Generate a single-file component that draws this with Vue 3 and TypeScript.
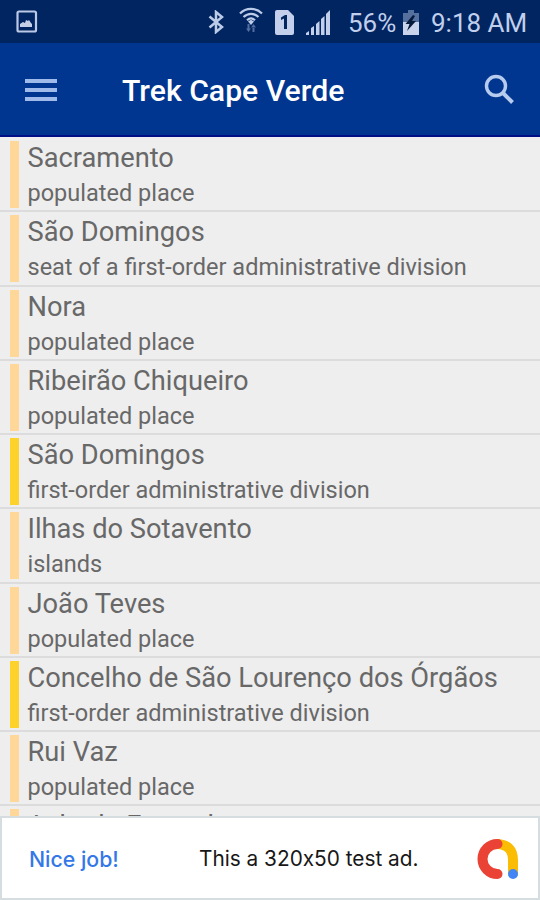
<script setup lang="ts">
interface Place {
  name: string
  kind: string
  major?: boolean
}

const places: Place[] = [
  { name: 'Sacramento', kind: 'populated place' },
  { name: 'São Domingos', kind: 'seat of a first-order administrative division' },
  { name: 'Nora', kind: 'populated place' },
  { name: 'Ribeirão Chiqueiro', kind: 'populated place' },
  { name: 'São Domingos', kind: 'first-order administrative division', major: true },
  { name: 'Ilhas do Sotavento', kind: 'islands' },
  { name: 'João Teves', kind: 'populated place' },
  { name: 'Concelho de São Lourenço dos Órgãos', kind: 'first-order administrative division', major: true },
  { name: 'Rui Vaz', kind: 'populated place' },
  { name: 'Achada Fazenda', kind: '' },
]
</script>

<template>
  <div class="screen">
    <div class="status">
      <svg class="picture" width="22" height="24" viewBox="0 0 22 24">
        <rect x="1.5" y="1.5" width="18.5" height="20" rx="1.5" fill="none" stroke="#bcc9e6" stroke-width="2.2" />
        <path d="M4 17v-3l3-2 2 1 1-3 2 1 1-1 2 3 1 1v3z" fill="#c5d0e8" />
      </svg>
      <svg class="bluetooth" width="16" height="24" viewBox="0 0 16 24">
        <path d="M1.500 6.500 14 17 8 22V2l6 5L1.500 17.500" fill="none" stroke="#bccbe8" stroke-width="2.500" />
      </svg>
      <svg class="wifi" width="24" height="26" viewBox="0 0 24 26">
        <g fill="none" stroke="#bccbe8" stroke-width="2.200">
          <path d="M1 6.500C7 .4 17 .4 23 6.500M4.500 10c4.500-4.300 10.500-4.300 15 0M8 13.300c2.500-2.300 5.500-2.300 8 0" />
        </g>
        <path d="m9 14.500 3-1.800 3 1.800-3 3.500z" fill="#bccbe8" />
        <path d="M7 21.500h5L9.500 25zM8.500 17h2v5h-2zM12 20.500h5L14.500 17zM13.500 20h2v5h-2z" fill="#526d9f" />
      </svg>
      <svg class="sim" width="19" height="25" viewBox="0 0 19 25">
        <path d="M2 0h11l6 6v17q0 2-2 2H2q-2 0-2-2V2q0-2 2-2z" fill="#c4d0eb" />
        <path d="M6 7.500 10 5h2v14H9V8.500L6 10z" fill="#00265f" />
      </svg>
      <svg class="signal" width="24" height="25" viewBox="0 0 24 25">
        <path d="M0 25v-2l3-2v4zM5 25v-7l3-2v9zM10 25V14l3.500-3v14zM15 25V9l3.500-3v19zM20 25V4l4-4v25z" fill="#c4d0eb" />
      </svg>
      <span class="percent">56%</span>
      <svg class="battery" width="16" height="25" viewBox="0 0 16 25">
        <path d="M0 3h5V0h6v3h5v9H0z" fill="#55709f" />
        <path d="M0 12h16v13H0z" fill="#c9d3eb" />
        <path d="M10 5 2.500 14h4L4 21l9-10H9l3-5z" fill="#061b3c" />
      </svg>
      <span class="clock">9:18 AM</span>
    </div>

    <header class="bar">
      <svg class="menu" width="32" height="24" viewBox="0 0 32 24">
        <path d="M0 1h32v4H0zM0 10h32v4H0zM0 19h32v4H0z" fill="#a0bbea" />
      </svg>
      <h1>Trek Cape Verde</h1>
      <svg class="search" width="32" height="32" viewBox="0 0 32 32">
        <circle cx="12" cy="12" r="9.500" fill="none" stroke="#b7cbee" stroke-width="3.400" />
        <path d="m18.500 18.500 10 10" stroke="#b7cbee" stroke-width="4" />
      </svg>
    </header>

    <main class="list">
      <div v-for="(place, i) in places" :key="i" class="row">
        <span class="mark" :class="{ major: place.major }"></span>
        <div class="copy">
          <div class="name">{{ place.name }}</div>
          <div class="kind">{{ place.kind }}</div>
        </div>
      </div>
    </main>

    <footer class="ad">
      <span class="praise">Nice job!</span>
      <span class="message">This a 320x50 test ad.</span>
      <svg class="logo" width="42" height="42" viewBox="0 0 42 42">
        <g fill="none" stroke-width="10" stroke-linecap="round">
          <path d="M20.500 6Q36 7 36 22v13" stroke="#fbbc04" />
          <path d="M20.500 6a15 15 0 0 0 0 30" stroke="#ea4335" />
        </g>
        <circle cx="36" cy="36" r="5" fill="#4285f4" />
      </svg>
    </footer>
  </div>
</template>

<style>
body {
  margin: 0;
}
</style>

<style scoped>
.screen {
  width: 540px;
  height: 900px;
  display: flex;
  flex-direction: column;
  overflow: hidden;
  background: #eee;
  font-family: Roboto, sans-serif;
}

.status {
  height: 43px;
  flex: none;
  box-sizing: border-box;
  display: flex;
  align-items: flex-start;
  padding: 10px 0 0 16px;
  background: #002560;
  color: #c1cfec;
  font-size: 26px;
  line-height: 27px;
  white-space: nowrap;
}

.bluetooth { margin-left: 170px; }
.wifi { margin: -3px 0 0 15px; }
.sim { margin-left: 12px; }
.signal { margin-left: 12px; }
.percent { width: 54px; margin-left: 18px; }
.battery { margin-left: 1px; }
.clock { margin-left: 12px; }

.bar {
  height: 94px;
  flex: none;
  box-sizing: border-box;
  display: flex;
  align-items: center;
  padding: 2px 24px 0 25px;
  background: #003590;
  border-bottom: 2px solid #000f85;
}

h1 {
  margin: 2px 0 0 65px;
  color: #fff;
  font-size: 30.2px;
  font-weight: 500;
  line-height: 36px;
  white-space: nowrap;
}

.search { margin-left: auto; }

.list {
  flex: 1;
  min-height: 0;
  overflow: hidden;
  padding-top: 1px;
}

.row {
  height: 74.25px;
  box-sizing: border-box;
  display: flex;
  padding: 3px 0 3px 9.5px;
  border-bottom: 2px solid #dcdcdc;
}

.mark {
  width: 9px;
  height: 67px;
  background: #ffd798;
}

.mark.major { background: #fdd32b; }

.copy {
  padding-left: 9px;
  color: #686868;
  white-space: nowrap;
}

.name {
  height: 35px;
  font-size: 27.25px;
  line-height: 35px;
}

.kind {
  font-size: 23.5px;
  line-height: 34px;
}

.ad {
  height: 84px;
  flex: none;
  box-sizing: border-box;
  display: flex;
  align-items: center;
  padding: 1px 19px 0 27px;
  background: #fff;
  border: 2px solid #d5dde0;
  font-family: Inter, sans-serif;
  font-size: 20.8px;
  font-feature-settings: "calt" 0;
  white-space: nowrap;
}

.praise {
  width: 170px;
  color: #3478e8;
  font-size: 21.3px;
  font-weight: 500;
}

.message { color: #171717; }
.logo { margin-left: auto; }
</style>
